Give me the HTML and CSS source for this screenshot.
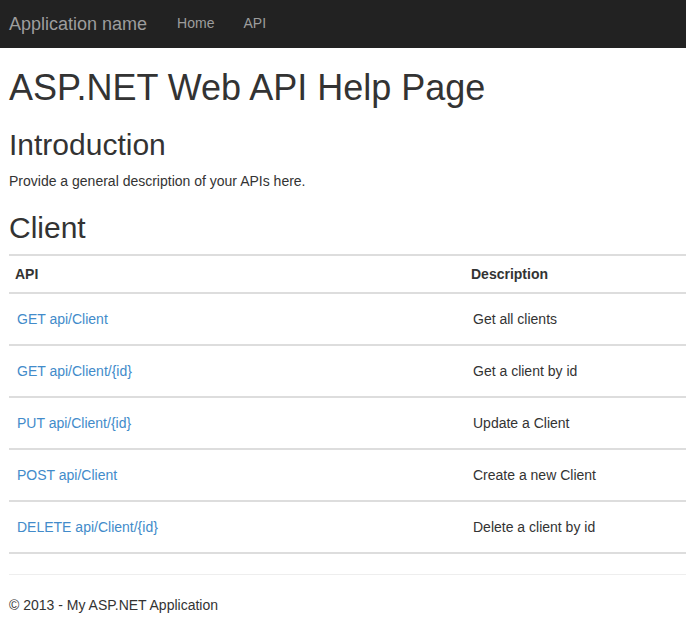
FILE: index.html
```html
<!DOCTYPE html>
<html>
<head>
<meta charset="utf-8">
<title>ASP.NET Web API Help Page</title>
<link rel="stylesheet" href="styles.css">
</head>
<body>
<div class="navbar">
  <a class="brand" href="#">Application name</a>
  <ul class="nav">
    <li><a href="#">Home</a></li>
    <li><a href="#">API</a></li>
  </ul>
</div>
<div class="container">
  <h1>ASP.NET Web API Help Page</h1>
  <h2>Introduction</h2>
  <p>Provide a general description of your APIs here.</p>
  <h2>Client</h2>
  <table class="help-table">
    <thead>
      <tr><th class="col-api">API</th><th>Description</th></tr>
    </thead>
    <tbody>
      <tr><td class="api-name"><a href="#">GET api/Client</a></td><td class="api-doc">Get all clients</td></tr>
      <tr><td class="api-name"><a href="#">GET api/Client/{id}</a></td><td class="api-doc">Get a client by id</td></tr>
      <tr><td class="api-name"><a href="#">PUT api/Client/{id}</a></td><td class="api-doc">Update a Client</td></tr>
      <tr><td class="api-name"><a href="#">POST api/Client</a></td><td class="api-doc">Create a new Client</td></tr>
      <tr><td class="api-name"><a href="#">DELETE api/Client/{id}</a></td><td class="api-doc">Delete a client by id</td></tr>
    </tbody>
  </table>
  <hr class="divider">
  <footer class="footer">
    <p>&copy; 2013 - My ASP.NET Application</p>
  </footer>
</div>
</body>
</html>
```

FILE: styles.css
```css
html, body {
  margin: 0;
  padding: 0;
}
body {
  font-family: "Liberation Sans", Arial, sans-serif;
  font-size: 14px;
  line-height: 20px;
  color: #333;
  background: #fff;
}
a {
  color: #428bca;
  text-decoration: none;
}
.navbar {
  height: 48px;
  background: #222;
  display: flex;
  align-items: flex-start;
  box-sizing: border-box;
}
.brand {
  display: block;
  font-size: 18px;
  line-height: 20px;
  padding: 14px 15px 14px 9px;
  color: #9d9d9d;
}
.nav {
  list-style: none;
  margin: 0;
  padding: 0;
  display: flex;
}
.nav a {
  display: block;
  padding: 13px 14px 13px 15px;
  line-height: 20px;
  color: #9d9d9d;
}
.container {
  padding: 0 0 1px 9px;
}
h1, h2 {
  font-family: "Liberation Sans", Arial, sans-serif;
  font-weight: 500;
  line-height: 1.1;
  color: #333;
  margin: 20px 0 10px;
}
h1 {
  font-size: 36px;
}
h2 {
  font-size: 30px;
}
p {
  margin: 0 0 10px;
}
.help-table {
  width: 100%;
  border-collapse: collapse;
  border-top: 2px solid #ddd;
  margin-bottom: 20px;
}
.help-table th {
  text-align: left;
  font-weight: bold;
  padding: 8px 6px;
  line-height: 20px;
  border-bottom: 2px solid #ddd;
}
.help-table .col-api {
  width: 444px;
}
.help-table td {
  padding: 15px 8px;
  line-height: 20px;
  border-bottom: 2px solid #ddd;
  vertical-align: top;
}
.divider {
  margin: 20px 0 20px;
  border: 0;
  border-top: 1px solid #eee;
  height: 0;
}
.footer p {
  margin: 0 0 10px;
}
```
